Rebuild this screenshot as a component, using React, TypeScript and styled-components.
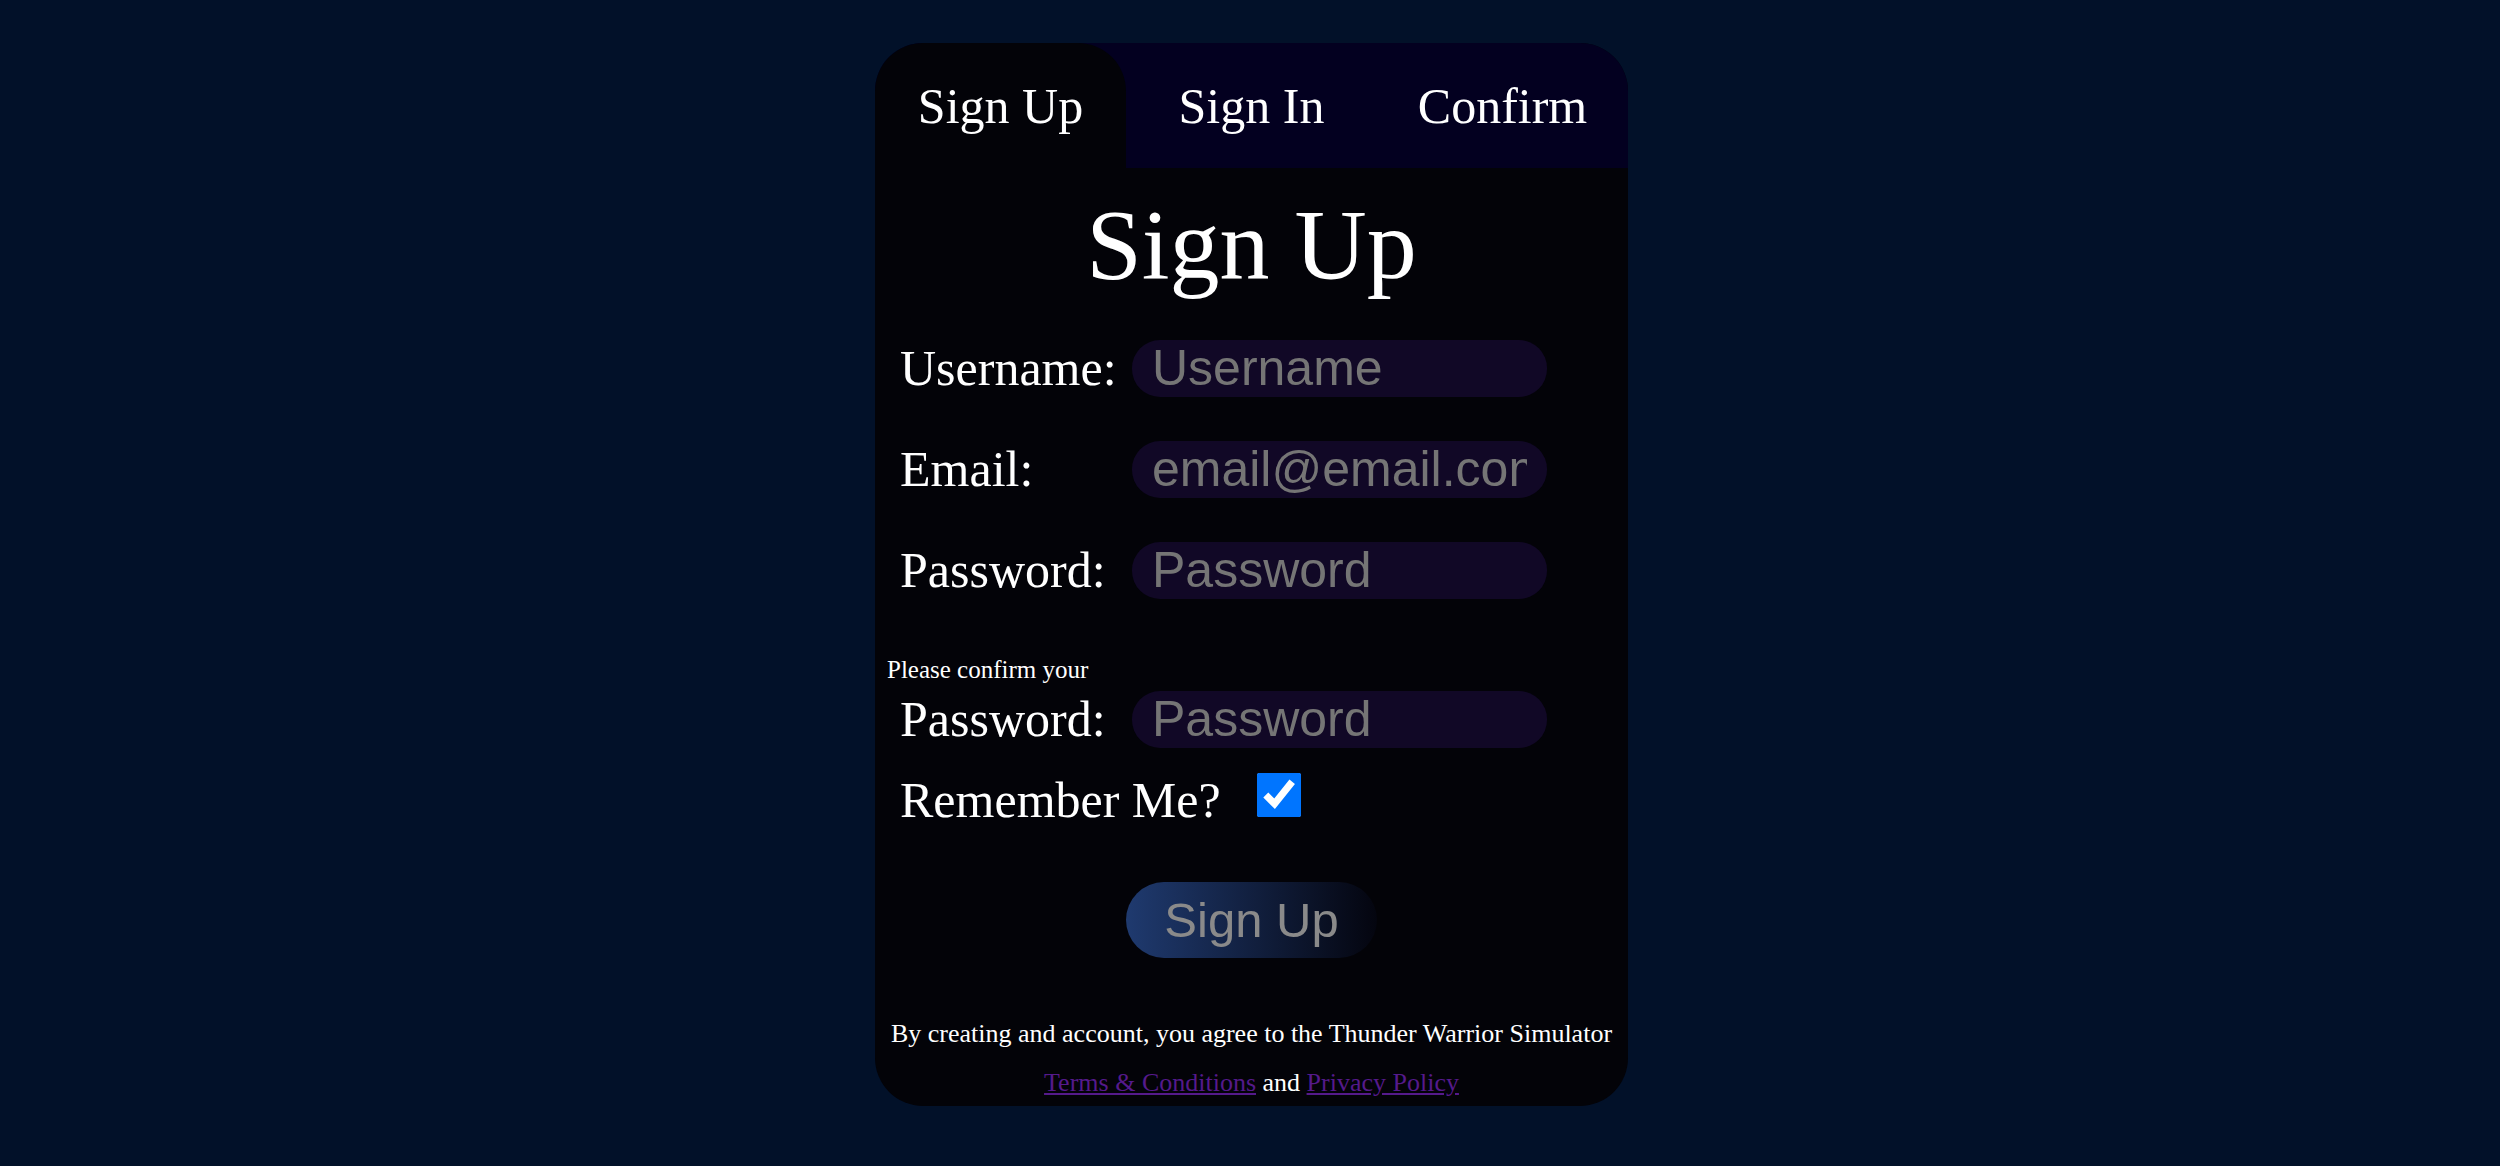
import React from "react";
import styled, { createGlobalStyle } from "styled-components";

const Global = createGlobalStyle`
  html, body {
    margin: 0;
    padding: 0;
    background: #021129;
  }
  body {
    font-family: "Liberation Serif", "Times New Roman", serif;
    color: #ffffff;
  }
`;

const Page = styled.div`
  min-height: 1166px;
  box-sizing: border-box;
  padding: 43px 0 0 3px;
  display: flex;
  justify-content: center;
  align-items: flex-start;
`;

const Card = styled.div`
  width: 753px;
  height: 1063px;
  background: #030308;
  border-radius: 48px;
  overflow: hidden;
  display: flex;
  flex-direction: column;
`;

const TabBar = styled.div`
  display: grid;
  grid-template-columns: repeat(3, 1fr);
  height: 125px;
  background: #030020;
`;

const Tab = styled.button<{ $active?: boolean }>`
  border: none;
  padding: 0;
  margin: 0;
  background: ${(p) => (p.$active ? "#030308" : "transparent")};
  border-radius: 48px 48px 0 0;
  color: #ffffff;
  font-family: "Liberation Serif", "Times New Roman", serif;
  font-size: 50px;
  line-height: normal;
  cursor: pointer;
`;

const Heading = styled.h1`
  margin: 19px 0 37px;
  font-size: 100px;
  font-weight: normal;
  line-height: normal;
  text-align: center;
`;

const Form = styled.form`
  display: flex;
  flex-direction: column;
  padding: 0 12px;
`;

const Row = styled.div<{ $after?: number }>`
  display: flex;
  align-items: center;
  padding-left: 13px;
  margin-bottom: ${(p) => p.$after ?? 43}px;
`;

const Label = styled.label<{ $auto?: boolean }>`
  width: ${(p) => (p.$auto ? "auto" : "232px")};
  flex-shrink: 0;
  font-size: 50px;
  line-height: normal;
`;

const Field = styled.input`
  width: 415px;
  height: 57px;
  box-sizing: border-box;
  border: none;
  outline: none;
  border-radius: 28px;
  background: #110826;
  padding: 0 20px;
  color: #ffffff;
  font-family: "Liberation Sans", Arial, sans-serif;
  font-size: 50px;
  &::placeholder {
    color: #757575;
  }
`;

const Hint = styled.div`
  font-size: 25px;
  line-height: normal;
  margin: 57px 0 6px;
`;

const Check = styled.input`
  width: 44px;
  height: 44px;
  margin: 0 0 11px 36px;
`;

const Submit = styled.button`
  align-self: center;
  margin-top: 53px;
  width: 251px;
  height: 76px;
  border: none;
  border-radius: 38px;
  background: linear-gradient(to right, #1f3a6f, #04050f);
  color: #8a8a8a;
  font-family: "Liberation Sans", Arial, sans-serif;
  font-size: 49px;
  padding: 0;
  cursor: pointer;
`;

const Footer = styled.div`
  text-align: center;
  font-size: 26px;
  line-height: normal;
`;

const FooterLine = styled.p<{ $top: number }>`
  margin: ${(p) => p.$top}px 0 0;
`;

const Link = styled.a`
  color: #551a8b;
  text-decoration: underline;
`;

export default function App() {
  return (
    <>
      <Global />
      <Page>
        <Card>
          <TabBar>
            <Tab $active>Sign Up</Tab>
            <Tab>Sign In</Tab>
            <Tab>Confirm</Tab>
          </TabBar>
          <Heading>Sign Up</Heading>
          <Form onSubmit={(e) => e.preventDefault()}>
            <Row>
              <Label htmlFor="username">Username:</Label>
              <Field id="username" placeholder="Username" />
            </Row>
            <Row>
              <Label htmlFor="email">Email:</Label>
              <Field id="email" placeholder="email@email.com" />
            </Row>
            <Row $after={0}>
              <Label htmlFor="password">Password:</Label>
              <Field id="password" type="password" placeholder="Password" />
            </Row>
            <Hint>Please confirm your</Hint>
            <Row $after={23}>
              <Label htmlFor="confirm">Password:</Label>
              <Field id="confirm" type="password" placeholder="Password" />
            </Row>
            <Row $after={0}>
              <Label $auto htmlFor="remember">Remember Me?</Label>
              <Check id="remember" type="checkbox" defaultChecked />
            </Row>
            <Submit type="submit">Sign Up</Submit>
          </Form>
          <Footer>
            <FooterLine $top={61}>
              By creating and account, you agree to the Thunder Warrior Simulator
            </FooterLine>
            <FooterLine $top={19}>
              <Link href="#terms">Terms &amp; Conditions</Link> and{" "}
              <Link href="#privacy">Privacy Policy</Link>
            </FooterLine>
          </Footer>
        </Card>
      </Page>
    </>
  );
}
